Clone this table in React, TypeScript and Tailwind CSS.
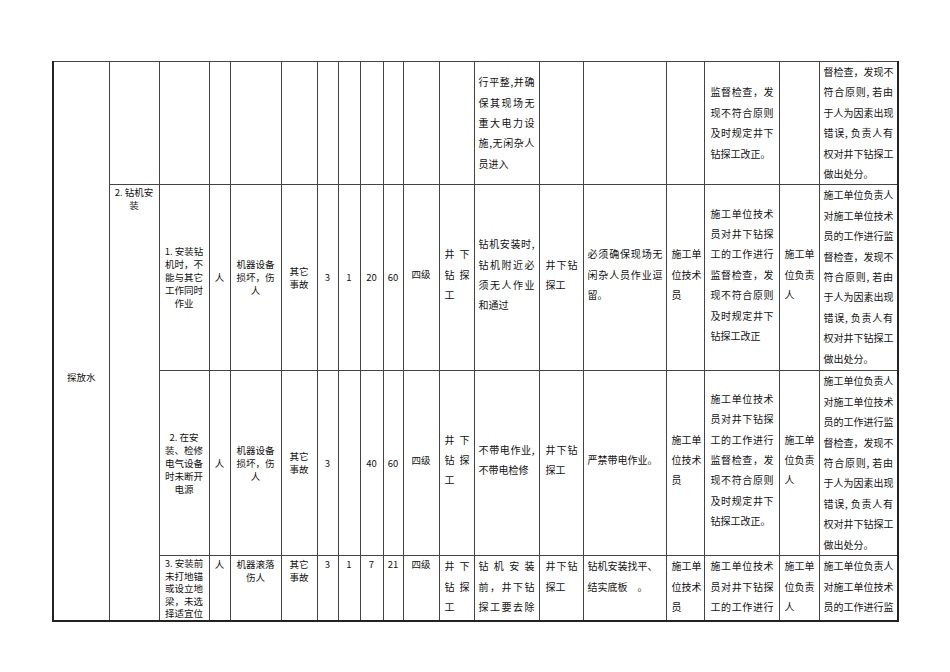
import React from "react";

// left-hand cells: small centred text
const L = "text-center text-[9.5px] leading-[13px] whitespace-nowrap";
// right-hand cells: justified lines with wide leading
const R = "text-[10px] leading-[20.4px] text-left";

function Stack({ lines }: { lines: string[] }) {
  return (
    <>
      {lines.map((l, i) => (
        <div key={i} className="whitespace-nowrap">
          {l}
        </div>
      ))}
    </>
  );
}

function Just({ lines, open = false }: { lines: string[]; open?: boolean }) {
  return (
    <>
      {lines.map((l, i) => (
        <div
          key={i}
          className={
            i < lines.length - 1 || open
              ? "whitespace-nowrap [text-align-last:justify] text-justify"
              : "whitespace-nowrap"
          }
        >
          {l}
        </div>
      ))}
    </>
  );
}

const td = "border border-[#444] p-0";

const boss17a = [
  "施工单位技术",
  "员对井下钻探",
  "工的工作进行",
  "监督检查，发",
  "现不符合原则",
  "及时规定井下",
];

const boss19 = [
  "施工单位负责人",
  "对施工单位技术",
  "员的工作进行监",
  "督检查，发现不",
  "符合原则, 若由",
  "于人为因素出现",
  "错误, 负责人有",
  "权对井下钻探工",
  "做出处分。",
];

type Mid = {
  c3: string[];
  c8: string;
  c9: string;
  c13: string[];
  c15: React.ReactNode;
  end17: string;
};

// the 17 cells of a vertically centred hazard row (col 3 to col 19)
function MidCells(props: Mid) {
  const mid = `${td} align-middle`;
  const midR = `${td} align-middle pb-[6px]`;
  return (
    <>
      <td className={`${mid} ${L}`}>
        <Stack lines={props.c3} />
      </td>
      <td className={`${mid} ${L}`}>人</td>
      <td className={`${mid} ${L}`}>
        <Stack lines={["机器设备", "损坏，伤", "人"]} />
      </td>
      <td className={`${mid} ${L}`}>
        <Stack lines={["其它", "事故"]} />
      </td>
      <td className={`${mid} ${L}`}>3</td>
      <td className={`${mid} ${L}`}>{props.c8}</td>
      <td className={`${mid} ${L}`}>{props.c9}</td>
      <td className={`${mid} ${L}`}>60</td>
      <td className={`${midR} ${L}`}>四级</td>
      <td className={`${midR} ${R} pl-[5px] pr-[4px]`}>
        <Just lines={["井下", "钻探", "工"]} />
      </td>
      <td className={`${midR} ${R} px-[4px]`}>
        <Just lines={props.c13} />
      </td>
      <td className={`${midR} ${R} pl-[6px] pr-[5px]`}>
        <Just lines={["井下钻", "探工"]} />
      </td>
      <td className={`${midR} ${R} pl-[4px] pr-[3px]`}>{props.c15}</td>
      <td className={`${midR} ${R} pl-[5px] pr-[4px]`}>
        <Just lines={["施工单", "位技术", "员"]} />
      </td>
      <td className={`${midR} ${R} pl-[6px] pr-[5px]`}>
        <Just lines={[...boss17a, props.end17]} />
      </td>
      <td className={`${midR} ${R} px-[5px]`}>
        <Just lines={["施工单", "位负责", "人"]} />
      </td>
      <td className={`${td} align-top ${R} px-[4px]`}>
        <Just lines={boss19} />
      </td>
    </>
  );
}

export default function App() {
  const top = `${td} align-top`;
  return (
    <div className="w-[950px] h-[672px] bg-white pl-[52px] pt-[61px] text-[#111] font-['Noto_Sans_CJK_SC','Noto_Sans',sans-serif]">
      <table className="table-fixed border-collapse w-[845px] border-t border-t-[#666] border-l-2 border-r-2 border-b-2 border-[#222]">
        <colgroup>
          <col className="w-[56px]" />
          <col className="w-[50px]" />
          <col className="w-[50px]" />
          <col className="w-[21px]" />
          <col className="w-[51px]" />
          <col className="w-[36px]" />
          <col className="w-[21px]" />
          <col className="w-[22px]" />
          <col className="w-[23px]" />
          <col className="w-[20px]" />
          <col className="w-[36px]" />
          <col className="w-[35px]" />
          <col className="w-[65px]" />
          <col className="w-[44px]" />
          <col className="w-[83px]" />
          <col className="w-[38px]" />
          <col className="w-[75px]" />
          <col className="w-[40px]" />
          <col className="w-[79px]" />
        </colgroup>
        <tbody>
          {/* continued from previous page */}
          <tr className="h-[123px]">
            <td rowSpan={4} className={`${top} ${L} pt-[309px]`}>
              探放水
            </td>
            <td className={td}></td>
            <td className={td}></td>
            <td className={td}></td>
            <td className={td}></td>
            <td className={td}></td>
            <td className={td}></td>
            <td className={td}></td>
            <td className={td}></td>
            <td className={td}></td>
            <td className={td}></td>
            <td className={td}></td>
            <td className={`${td} align-middle ${R} px-[4px]`}>
              <Just lines={["行平整,并确", "保其现场无", "重大电力设", "施,无闲杂人", "员进入"]} />
            </td>
            <td className={td}></td>
            <td className={td}></td>
            <td className={td}></td>
            <td className={`${td} align-middle ${R} pl-[6px] pr-[5px]`}>
              <Just lines={["监督检查，发", "现不符合原则", "及时规定井下", "钻探工改正。"]} />
            </td>
            <td className={td}></td>
            <td className={`${top} ${R} px-[4px]`}>
              <Just lines={boss19.slice(3)} />
            </td>
          </tr>

          <tr className="h-[186px]">
            <td rowSpan={3} className={`${top} ${L} pt-px`}>
              <Stack lines={["2. 钻机安", "装"]} />
            </td>
            <MidCells
              c3={["1. 安装钻", "机时，不", "能与其它", "工作同时", "作业"]}
              c8="1"
              c9="20"
              c13={["钻机安装时,", "钻机附近必", "须无人作业", "和通过"]}
              c15={<Just lines={["必须确保现场无", "闲杂人员作业逗", "留。"]} />}
              end17="钻探工改正"
            />
          </tr>

          <tr className="h-[184px]">
            <MidCells
              c3={["2. 在安", "装、检修", "电气设备", "时未断开", "电源"]}
              c8=""
              c9="40"
              c13={["不带电作业,", "不带电检修"]}
              c15={<Stack lines={["严禁带电作业。"]} />}
              end17="钻探工改正。"
            />
          </tr>

          {/* row is cut off by the page end */}
          <tr className="h-[63px]">
            <td className={`${top} text-center text-[9.5px] leading-[12.5px] pt-px`}>
              <Stack lines={["3. 安装前", "未打地锚", "或设立地", "梁，未选", "择适宜位"]} />
            </td>
            <td className={`${top} ${L} pt-[2px]`}>人</td>
            <td className={`${top} ${L} pt-[2px]`}>
              <Stack lines={["机器滚落", "伤人"]} />
            </td>
            <td className={`${top} ${L} pt-[2px]`}>
              <Stack lines={["其它", "事故"]} />
            </td>
            <td className={`${top} ${L} pt-[2px]`}>3</td>
            <td className={`${top} ${L} pt-[2px]`}>1</td>
            <td className={`${top} ${L} pt-[2px]`}>7</td>
            <td className={`${top} ${L} pt-[2px]`}>21</td>
            <td className={`${top} ${L} pt-[2px]`}>四级</td>
            <td className={`${top} ${R} pl-[5px] pr-[4px]`}>
              <Just lines={["井下", "钻探", "工"]} />
            </td>
            <td className={`${top} ${R} px-[4px]`}>
              <Just open lines={["钻机安装", "前，井下钻", "探工要去除"]} />
            </td>
            <td className={`${top} ${R} pl-[6px] pr-[5px]`}>
              <Just lines={["井下钻", "探工"]} />
            </td>
            <td className={`${top} ${R} pl-[4px] pr-[3px]`}>
              <Stack lines={["钻机安装找平、", "结实底板　。"]} />
            </td>
            <td className={`${top} ${R} pl-[5px] pr-[4px]`}>
              <Just lines={["施工单", "位技术", "员"]} />
            </td>
            <td className={`${top} ${R} pl-[6px] pr-[5px]`}>
              <Just open lines={boss17a.slice(0, 3)} />
            </td>
            <td className={`${top} ${R} px-[5px]`}>
              <Just lines={["施工单", "位负责", "人"]} />
            </td>
            <td className={`${top} ${R} px-[4px]`}>
              <Just open lines={boss19.slice(0, 3)} />
            </td>
          </tr>
        </tbody>
      </table>
    </div>
  );
}
